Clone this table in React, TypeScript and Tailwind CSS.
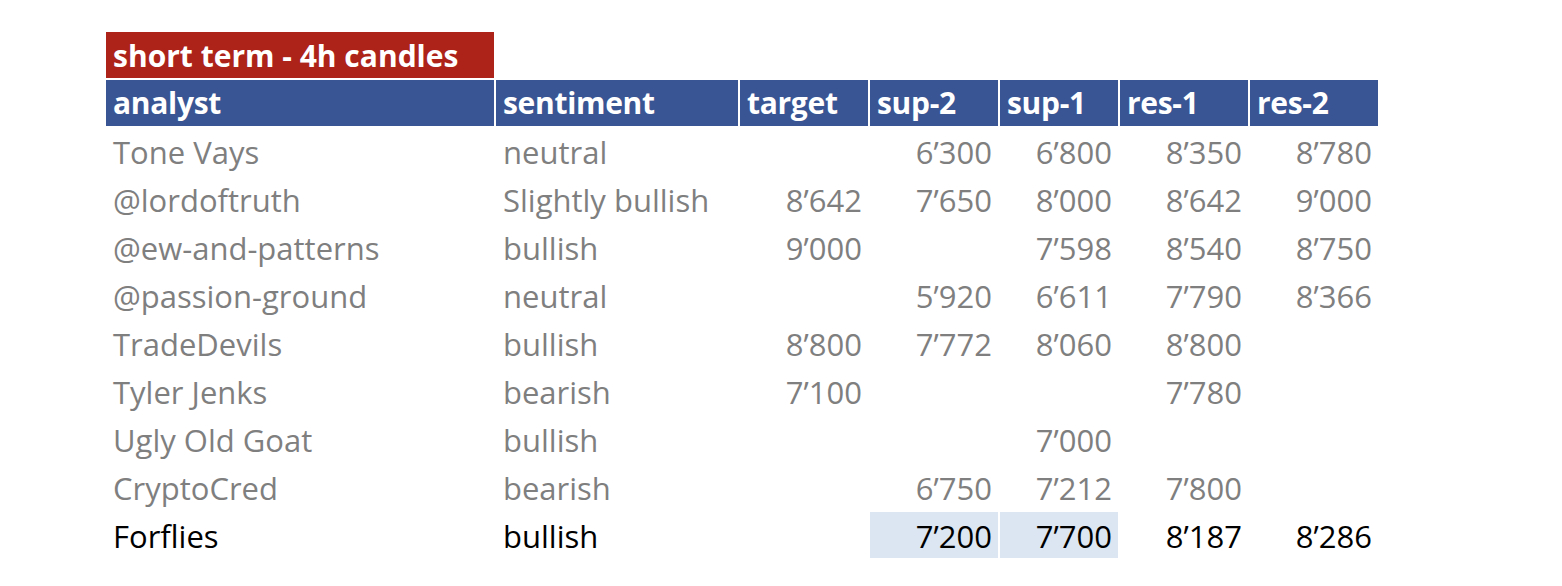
import React from "react";

type Row = {
  name: string;
  sentiment: string;
  values: string[]; // target, sup-2, sup-1, res-1, res-2
  mine?: boolean;
};

const rows: Row[] = [
  { name: "Tone Vays", sentiment: "neutral", values: ["", "6’300", "6’800", "8’350", "8’780"] },
  { name: "@lordoftruth", sentiment: "Slightly bullish", values: ["8’642", "7’650", "8’000", "8’642", "9’000"] },
  { name: "@ew-and-patterns", sentiment: "bullish", values: ["9’000", "", "7’598", "8’540", "8’750"] },
  { name: "@passion-ground", sentiment: "neutral", values: ["", "5’920", "6’611", "7’790", "8’366"] },
  { name: "TradeDevils", sentiment: "bullish", values: ["8’800", "7’772", "8’060", "8’800", ""] },
  { name: "Tyler Jenks", sentiment: "bearish", values: ["7’100", "", "", "7’780", ""] },
  { name: "Ugly Old Goat", sentiment: "bullish", values: ["", "", "7’000", "", ""] },
  { name: "CryptoCred", sentiment: "bearish", values: ["", "6’750", "7’212", "7’800", ""] },
  { name: "Forflies", sentiment: "bullish", values: ["", "7’200", "7’700", "8’187", "8’286"], mine: true },
];

const headers = ["analyst", "sentiment", "target", "sup-2", "sup-1", "res-1", "res-2"];

export default function App() {
  return (
    <div
      className="w-[1562px] h-[586px] bg-white pl-[106px] pt-[32px]"
      style={{ fontFamily: "'Open Sans', Lato, sans-serif" }}
    >
      <div className="grid grid-cols-[388px_242px_128px_128px_118px_128px_128px] gap-[2px] auto-rows-[46px]">
        <div className="bg-[#ad2219] text-white font-bold text-[30px] flex items-end pb-[7px] pl-[7px] leading-none whitespace-nowrap">
          short term - 4h candles
        </div>
        <div className="col-span-6" />

        {headers.map((h) => (
          <div
            key={h}
            className="bg-[#3a5593] text-white font-bold text-[30px] tracking-[-0.3px] flex items-end pb-[8px] pl-[7px] leading-none"
          >
            {h}
          </div>
        ))}

        {rows.map((r) => {
          const color = r.mine ? "text-black" : "text-[#7f7f7f]";
          return (
            <React.Fragment key={r.name}>
              <div className={`${color} text-[31px] flex items-end pb-[6px] pl-[7px] leading-none whitespace-nowrap`}>{r.name}</div>
              <div className={`${color} text-[31px] flex items-end pb-[6px] pl-[7px] leading-none whitespace-nowrap`}>{r.sentiment}</div>
              {r.values.map((v, i) => (
                <div
                  key={i}
                  className={`${color} ${r.mine && (i === 1 || i === 2) ? "bg-[#dce6f2]" : ""} text-[31px] flex items-end justify-end pb-[6px] pr-[6px] leading-none`}
                >
                  {v}
                </div>
              ))}
            </React.Fragment>
          );
        })}
      </div>
    </div>
  );
}
